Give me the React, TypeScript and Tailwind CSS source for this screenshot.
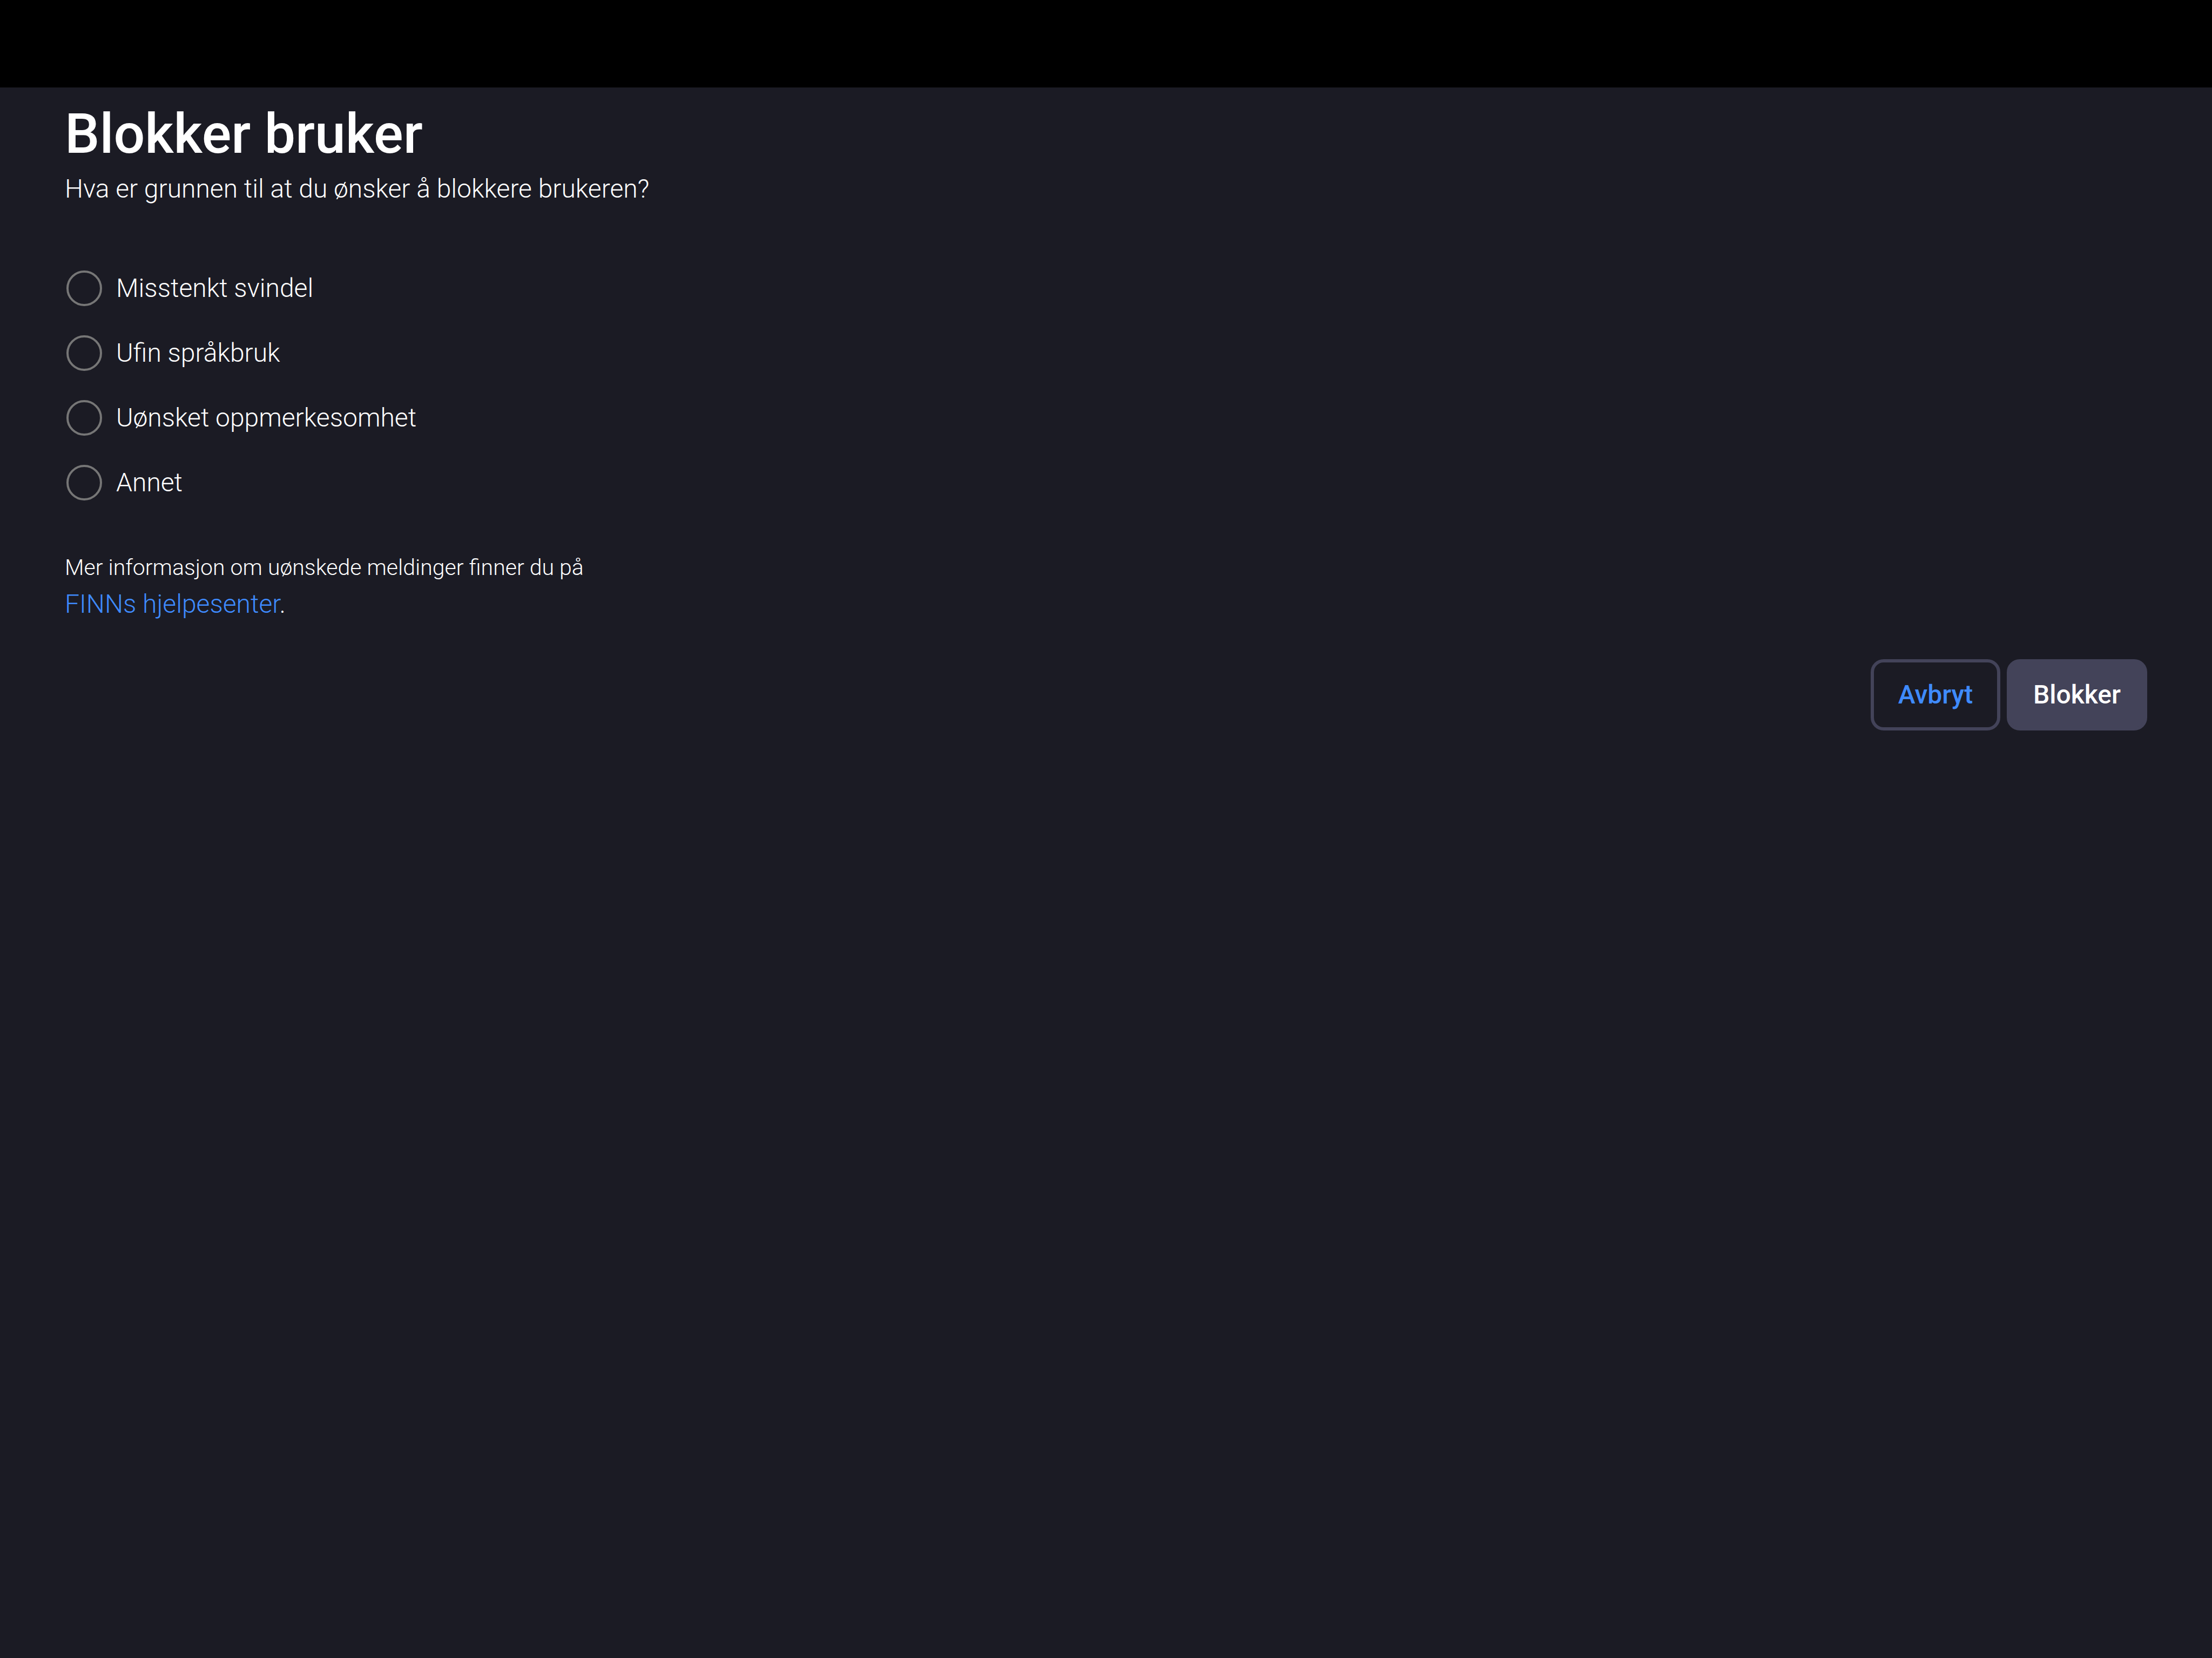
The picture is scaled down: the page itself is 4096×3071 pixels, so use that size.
const reasons = [
  { value: "svindel", label: "Misstenkt svindel" },
  { value: "sprakbruk", label: "Ufin språkbruk" },
  { value: "oppmerksomhet", label: "Uønsket oppmerkesomhet" },
  { value: "annet", label: "Annet" },
];

function ReasonOption({ value, label }: { value: string; label: string }) {
  return (
    <div className="flex items-center gap-[26px]">
      <input
        id={value}
        type="radio"
        name="reason"
        value={value}
        className="size-[66px] shrink-0 appearance-none rounded-full border-4 border-[#767676] checked:border-[18px] checked:border-[#3f8bff]"
      />
      <label htmlFor={value}>{label}</label>
    </div>
  );
}

export default function App() {
  return (
    <div className="min-h-screen bg-[#1b1b24] font-['Roboto',sans-serif] text-[48px] leading-[60px] font-light text-white">
      <div className="h-[162px] bg-black" />
      <main className="px-[120px] pt-[26px]">
        <h1 className="text-[102px] leading-[120px] font-medium">Blokker bruker</h1>
        <p className="mt-3">Hva er grunnen til at du ønsker å blokkere brukeren?</p>

        <form>
          <fieldset
            aria-label="Årsak"
            className="mt-[121px] ml-[3px] flex flex-col items-start gap-[54px]"
          >
            {reasons.map((reason) => (
              <ReasonOption key={reason.value} {...reason} />
            ))}
          </fieldset>

          <div className="mt-[90px] leading-[68px]">
            <p className="text-[41px]">Mer informasjon om uønskede meldinger finner du på</p>
            <p>
              <a href="#hjelpesenter" className="text-[#3f8bff]">
                FINNs hjelpesenter
              </a>
              .
            </p>
          </div>

          <div className="mt-[68px] flex justify-end gap-3 font-medium">
            <button
              type="button"
              className="h-[132px] min-w-[240px] rounded-3xl border-6 border-[#434359] px-[43px] text-[#3f8bff]"
            >
              Avbryt
            </button>
            <button
              type="submit"
              className="h-[132px] rounded-3xl border-6 border-[#434359] bg-[#434359] px-[43px]"
            >
              Blokker
            </button>
          </div>
        </form>
      </main>
    </div>
  );
}
